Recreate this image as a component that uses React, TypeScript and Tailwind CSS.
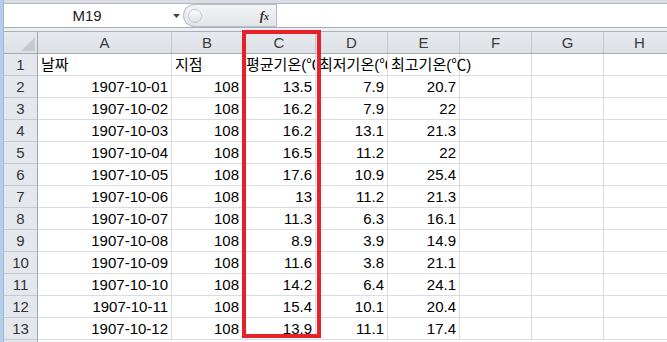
import React from 'react';

const FONT = { fontFamily: '"Liberation Sans", "Noto Sans CJK KR", sans-serif' };

const columns = [
  { key: 'A', w: 'w-[134px]' },
  { key: 'B', w: 'w-[71px]' },
  { key: 'C', w: 'w-[73px]' },
  { key: 'D', w: 'w-[72px]' },
  { key: 'E', w: 'w-[72px]' },
  { key: 'F', w: 'w-[72px]' },
  { key: 'G', w: 'w-[72px]' },
  { key: 'H', w: 'w-[72px]' },
];

const titles = ['날짜', '지점', '평균기온(℃)', '최저기온(℃)', '최고기온(℃)'];

const rows = [
  ['1907-10-01', '108', '13.5', '7.9', '20.7'],
  ['1907-10-02', '108', '16.2', '7.9', '22'],
  ['1907-10-03', '108', '16.2', '13.1', '21.3'],
  ['1907-10-04', '108', '16.5', '11.2', '22'],
  ['1907-10-05', '108', '17.6', '10.9', '25.4'],
  ['1907-10-06', '108', '13', '11.2', '21.3'],
  ['1907-10-07', '108', '11.3', '6.3', '16.1'],
  ['1907-10-08', '108', '8.9', '3.9', '14.9'],
  ['1907-10-09', '108', '11.6', '3.8', '21.1'],
  ['1907-10-10', '108', '14.2', '6.4', '24.1'],
  ['1907-10-11', '108', '15.4', '10.1', '20.4'],
  ['1907-10-12', '108', '13.9', '11.1', '17.4'],
];

const RowHead = ({ n }: { n: number | string }) => (
  <div className="w-[34px] shrink-0 h-[22px] border-r border-b border-[#c5cad1] border-r-[#9ea6af] bg-[#e4e8ee] text-center leading-[21px] text-[15px] text-[#333]">
    {n}
  </div>
);

const App = () => {
  return (
    <div className="relative w-[667px] h-[342px] overflow-hidden bg-white flex" style={FONT}>
      {/* window edge */}
      <div className="w-[4px] shrink-0 bg-[#b6cde9] border-r border-[#9cb6d6]" />

      <div className="flex-1 flex flex-col min-w-0">
        {/* top strip */}
        <div className="h-[4px] shrink-0 bg-[#d9dde3] border-b border-[#b3b9c1]" />

        {/* formula bar */}
        <div className="h-[23px] shrink-0 flex items-stretch bg-white">
          <div className="w-[166px] shrink-0 text-center text-[15px] leading-[23px] text-[#222]">M19</div>
          <div className="w-[13px] shrink-0 flex items-center justify-center">
            <svg width="7" height="4" viewBox="0 0 7 4">
              <path d="M0 0h7L3.5 4z" fill="#444" />
            </svg>
          </div>
          <div className="w-[93px] shrink-0 flex items-center rounded-l-full border border-r-0 border-[#b9bec5] bg-gradient-to-b from-[#f3f4f6] to-[#e1e4e8]">
            <div className="ml-[4px] w-[14px] h-[14px] rounded-full border border-[#c4c8ce] bg-gradient-to-b from-[#ffffff] to-[#dcdfe3]" />
            <div className="flex-1" />
            <span className="mr-[7px] text-[13px] italic font-bold text-[#333]" style={{ fontFamily: '"Liberation Serif", serif' }}>
              f<span className="text-[10px]">x</span>
            </span>
          </div>
          <div className="flex-1 border-l border-[#b9bec5] bg-white" />
        </div>

        {/* separator band */}
        <div className="h-[5px] shrink-0 bg-[#eceef1] border-t border-b border-[#a9afb7]" />

        {/* column headers */}
        <div className="h-[22px] shrink-0 flex border-b border-[#a6acb4] bg-gradient-to-b from-[#e6e9ed] to-[#dde1e6]">
          <div className="w-[34px] shrink-0 border-r border-[#9ea6af] flex items-end justify-end pr-[2px] pb-[2px]">
            <svg width="14" height="14" viewBox="0 0 14 14">
              <path d="M14 0V14H0z" fill="#c6cace" />
            </svg>
          </div>
          {columns.map((c) => (
            <div key={c.key} className={`${c.w} shrink-0 border-r border-[#c2c7cd] text-center text-[15px] leading-[21px] text-[#3a3a3a]`}>
              {c.key}
            </div>
          ))}
        </div>

        {/* row 1 titles */}
        <div className="flex shrink-0">
          <RowHead n={1} />
          {columns.map((c, i) => (
            <div
              key={c.key}
              className={`${c.w} shrink-0 h-[22px] border-r border-b border-[#dadcdf] pl-[3px] text-[15px] leading-[21px] text-black whitespace-nowrap ${i === 4 ? 'overflow-visible relative z-10' : 'overflow-hidden'}`}
            >
              {titles[i] ?? ''}
            </div>
          ))}
        </div>

        {rows.map((r, ri) => (
          <div key={ri} className="flex shrink-0">
            <RowHead n={ri + 2} />
            {columns.map((c, i) => (
              <div
                key={c.key}
                className={`${c.w} shrink-0 h-[22px] border-r border-b border-[#dadcdf] pr-[3px] text-right text-[15px] leading-[21px] text-black whitespace-nowrap overflow-hidden`}
              >
                {r[i] ?? ''}
              </div>
            ))}
          </div>
        ))}

        <div className="flex shrink-0">
          <RowHead n={14} />
        </div>
      </div>

      {/* highlight box */}
      <div className="absolute left-[242px] top-[30px] w-[79px] h-[308px] border-[4px] border-[#e8202a] pointer-events-none" />
    </div>
  );
};

export default App;
